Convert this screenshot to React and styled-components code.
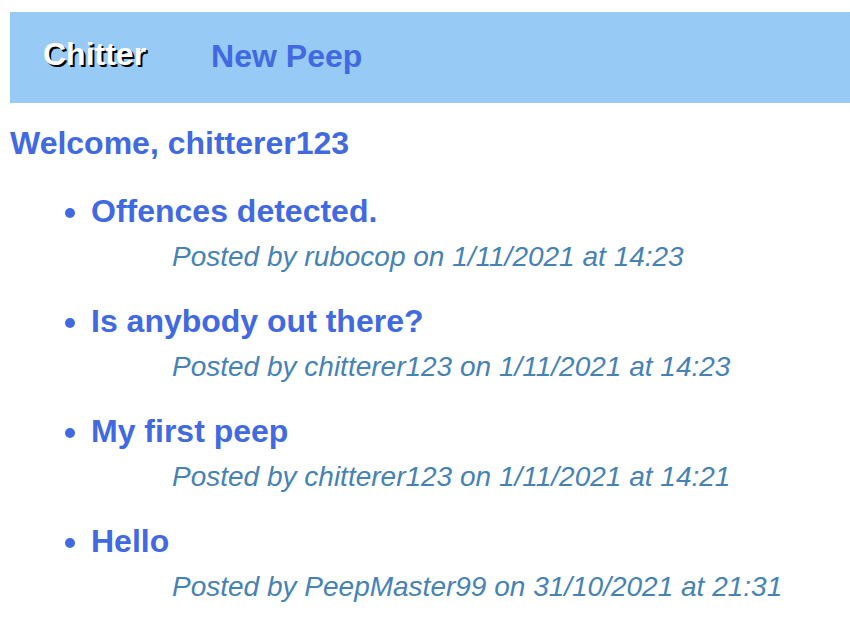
import React from "react";
import styled, { createGlobalStyle } from "styled-components";

const Global = createGlobalStyle`
  html, body { margin: 0; padding: 0; background: #ffffff; }
  body { font-family: "Liberation Sans", Arial, Helvetica, sans-serif; }
`;

const Page = styled.div`
  padding: 12px 0 0 10px;
`;

const NavBar = styled.nav`
  display: flex;
  align-items: flex-start;
  height: 91px;
  box-sizing: border-box;
  padding: 24px 0 0 33px;
  gap: 65px;
  background: #97caf5;
`;

const Brand = styled.div`
  font-size: 32px;
  line-height: 36px;
  font-weight: bold;
  color: #ffffff;
  text-shadow: 2px 2px 0 #000000;
`;

const NavLink = styled.a`
  font-size: 32px;
  line-height: 36px;
  font-weight: bold;
  color: #4169e1;
  text-decoration: none;
  margin-top: 2px;
`;

const Welcome = styled.h1`
  margin: 22px 0 0 0;
  font-size: 32px;
  line-height: 36px;
  font-weight: bold;
  color: #4169e1;
`;

const PeepList = styled.ul`
  margin: 32px 0 0 0;
  padding: 0 0 0 81px;
  list-style: disc;
  color: #4169e1;
`;

const Peep = styled.li`
  margin-bottom: 30px;
  font-size: 32px;
  line-height: 36px;
`;

const PeepText = styled.div`
  font-size: 32px;
  line-height: 36px;
  font-weight: bold;
  color: #4169e1;
`;

const Meta = styled.div`
  margin: 12px 0 0 81px;
  font-size: 28px;
  line-height: 32px;
  font-style: italic;
  color: #4682b4;
`;

const peeps = [
  { text: "Offences detected.", user: "rubocop", date: "1/11/2021", time: "14:23" },
  { text: "Is anybody out there?", user: "chitterer123", date: "1/11/2021", time: "14:23" },
  { text: "My first peep", user: "chitterer123", date: "1/11/2021", time: "14:21" },
  { text: "Hello", user: "PeepMaster99", date: "31/10/2021", time: "21:31" },
];

export default function App() {
  return (
    <Page>
      <Global />
      <NavBar>
        <Brand>Chitter</Brand>
        <NavLink href="#">New Peep</NavLink>
      </NavBar>
      <Welcome>Welcome, chitterer123</Welcome>
      <PeepList>
        {peeps.map((p, i) => (
          <Peep key={i}>
            <PeepText>{p.text}</PeepText>
            <Meta>
              Posted by {p.user} on {p.date} at {p.time}
            </Meta>
          </Peep>
        ))}
      </PeepList>
    </Page>
  );
}
